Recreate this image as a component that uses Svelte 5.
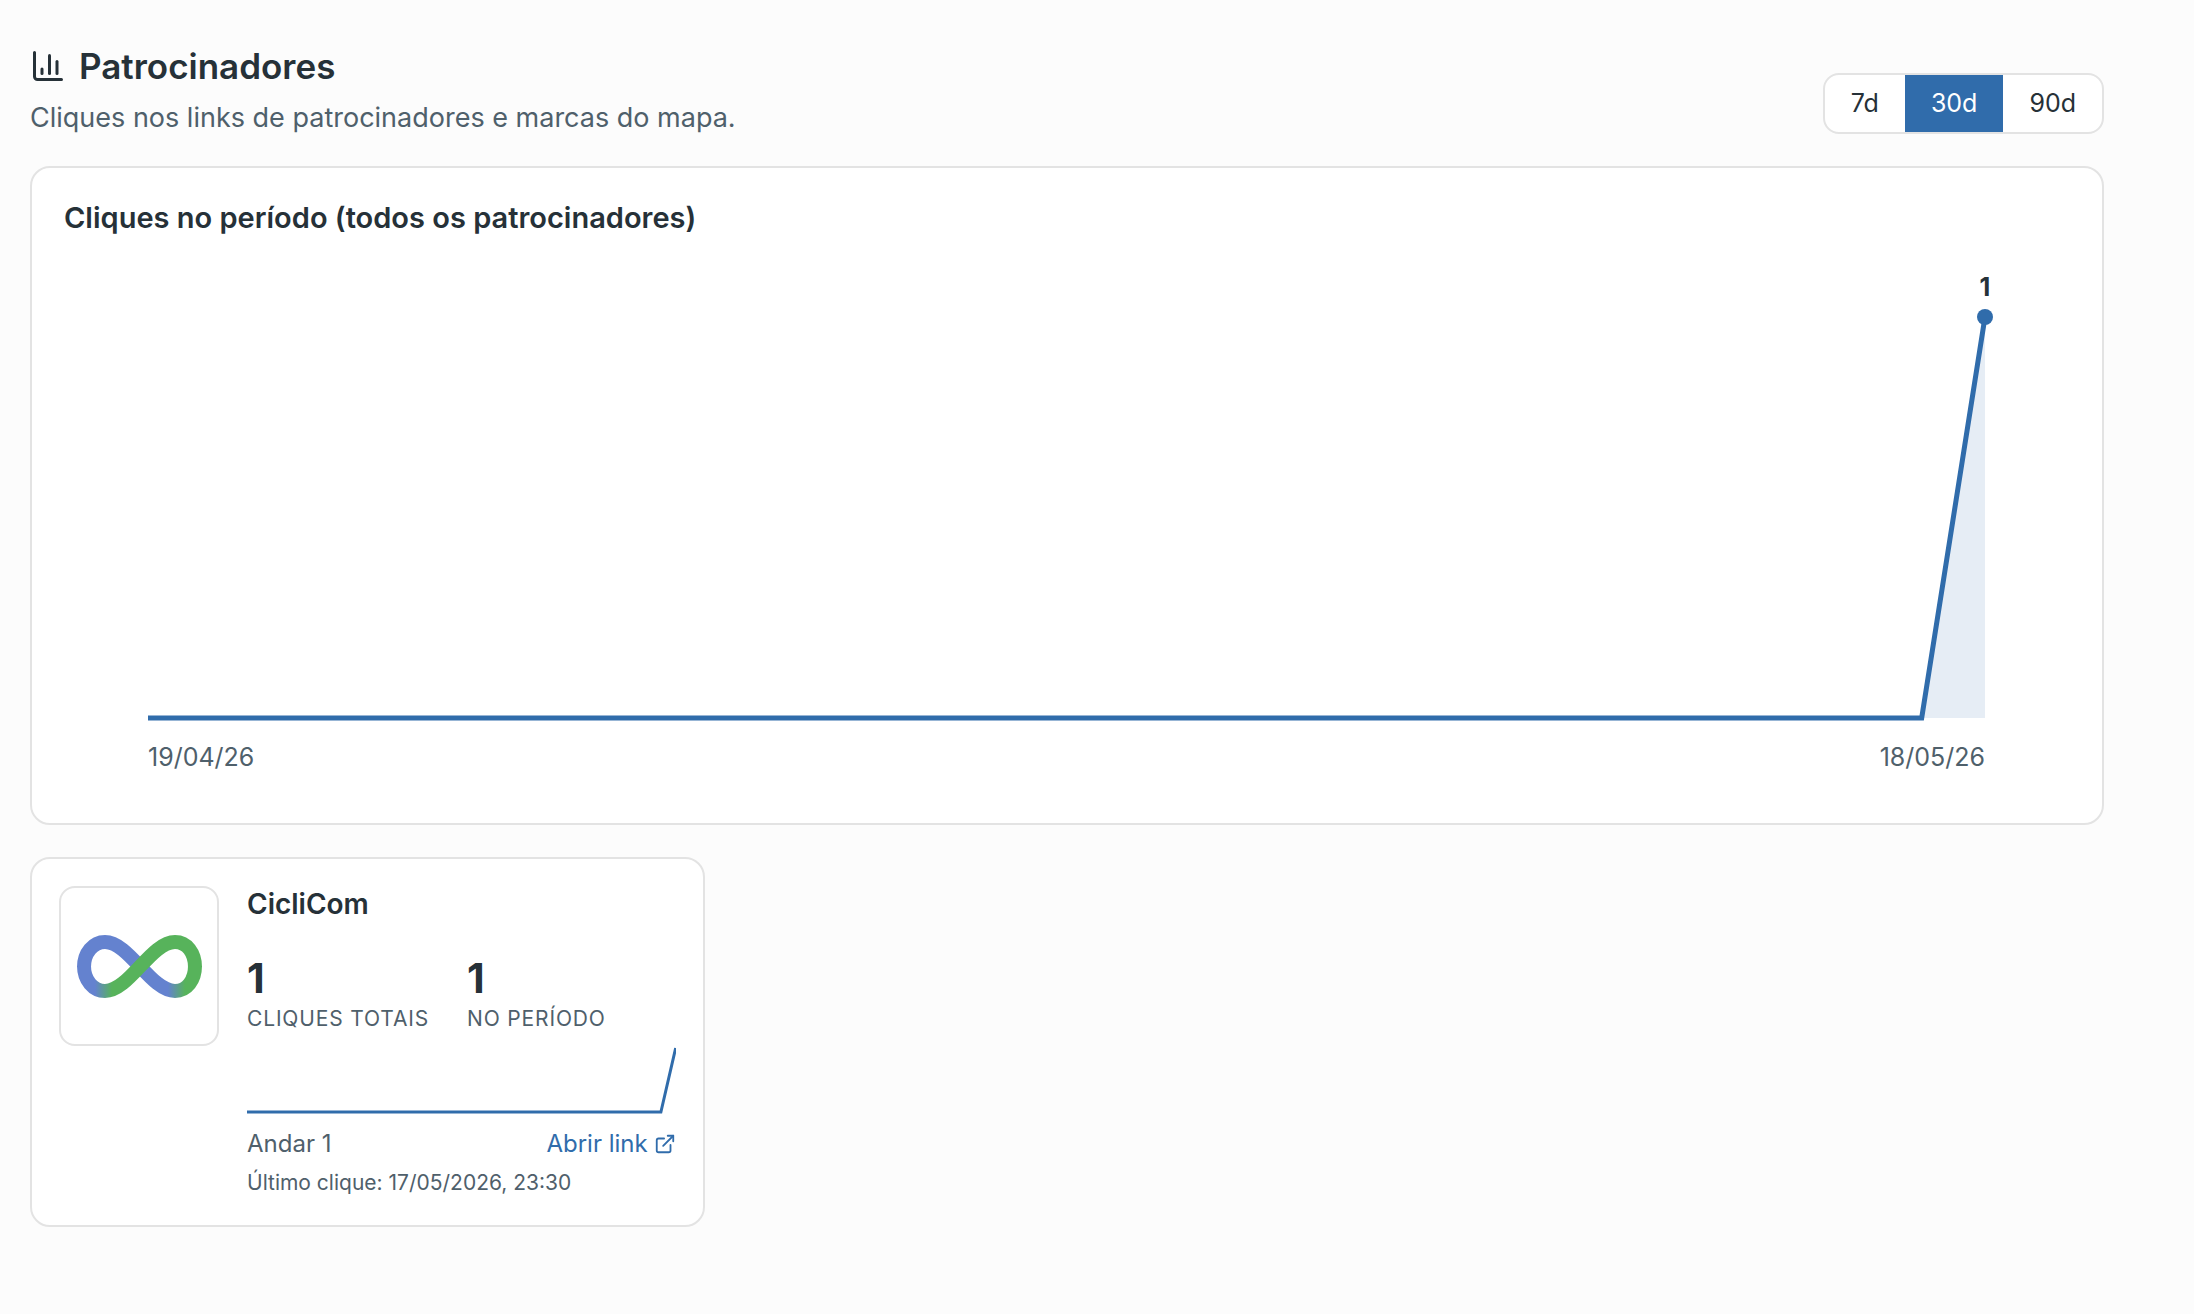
<script lang="ts">
	type Range = { days: number; label: string };

	const ranges: Range[] = [
		{ days: 7, label: '7d' },
		{ days: 30, label: '30d' },
		{ days: 90, label: '90d' }
	];

	let selected = $state(30);

	// Daily clicks, oldest first. Only the last day has any.
	const clicks: number[] = [...Array(29).fill(0), 1];
	const firstDay = '19/04/26';
	const lastDay = '18/05/26';

	const sponsors = [
		{
			name: 'CicliCom',
			total: 1,
			period: 1,
			floor: 'Andar 1',
			lastClick: '17/05/2026, 23:30',
			series: clicks
		}
	];

	// Plot area inside the 2006x540 viewBox
	const plot = { left: 84, right: 1921, top: 66, bottom: 467 };

	function toPoints(
		values: number[],
		box: { left: number; right: number; top: number; bottom: number }
	): string {
		const max = Math.max(...values, 1);
		const step = (box.right - box.left) / (values.length - 1);
		return values
			.map((v, i) => {
				const x = box.left + i * step;
				const y = box.bottom - (v / max) * (box.bottom - box.top);
				return `${x.toFixed(1)},${y.toFixed(1)}`;
			})
			.join(' ');
	}

	const line = toPoints(clicks, plot);
	const area = `${plot.left},${plot.bottom} ${line} ${plot.right},${plot.bottom}`;
</script>

<main class="page">
	<header class="header">
		<div class="heading">
			<h1>
				<svg class="icon-chart" viewBox="0 0 24 24" aria-hidden="true">
					<path d="M3 3v16a2 2 0 0 0 2 2h16" />
					<path d="M18 17V9" />
					<path d="M13 17V5" />
					<path d="M8 17v-3" />
				</svg>
				Patrocinadores
			</h1>
			<p>Cliques nos links de patrocinadores e marcas do mapa.</p>
		</div>
		<div class="ranges" role="group" aria-label="Período">
			{#each ranges as range (range.days)}
				<button
					type="button"
					class:active={selected === range.days}
					aria-pressed={selected === range.days}
					onclick={() => (selected = range.days)}
				>
					{range.label}
				</button>
			{/each}
		</div>
	</header>

	<section class="card chart-card">
		<h2>Cliques no período (todos os patrocinadores)</h2>
		<svg class="chart" viewBox="0 0 2006 540" role="img" aria-label="Cliques por dia">
			<polygon class="area" points={area} />
			<polyline class="line" points={line} />
			<circle cx={plot.right} cy={plot.top} r="8" />
			<text class="value" x={plot.right} y="45" text-anchor="middle">1</text>
			<text class="date" x={plot.left} y="515">{firstDay}</text>
			<text class="date" x={plot.right} y="515" text-anchor="end">{lastDay}</text>
		</svg>
	</section>

	<div class="grid">
		{#each sponsors as sponsor (sponsor.name)}
			<article class="card sponsor">
				<div class="logo">
					<svg viewBox="0 0 125 63" role="img" aria-label={sponsor.name}>
						<defs>
							<linearGradient id="fade-left" gradientUnits="userSpaceOnUse" x1="18" y1="0" x2="35" y2="0">
								<stop offset="0" stop-color="#6482cf" />
								<stop offset="1" stop-color="#57b35b" />
							</linearGradient>
							<linearGradient id="fade-right" gradientUnits="userSpaceOnUse" x1="91" y1="0" x2="108" y2="0">
								<stop offset="0" stop-color="#6482cf" />
								<stop offset="1" stop-color="#57b35b" />
							</linearGradient>
						</defs>
						<path
							stroke="url(#fade-right)"
							d="M7 32C7 18 16 7 28 7C52 7 74 56 98 56C110 56 118 45 118 31"
						/>
						<path
							stroke="url(#fade-left)"
							d="M7 31C7 45 16 56 28 56C52 56 74 7 98 7C110 7 118 18 118 32"
						/>
					</svg>
				</div>
				<div class="body">
					<h3>{sponsor.name}</h3>
					<dl class="stats">
						<div>
							<dt>Cliques totais</dt>
							<dd>{sponsor.total}</dd>
						</div>
						<div>
							<dt>No período</dt>
							<dd>{sponsor.period}</dd>
						</div>
					</dl>
					<svg class="spark" viewBox="0 0 430 72" preserveAspectRatio="none" aria-hidden="true">
						<polyline points={toPoints(sponsor.series, { left: 0, right: 430, top: 4, bottom: 68 })} />
					</svg>
					<div class="meta">
						<span>{sponsor.floor}</span>
						<a href="#ciclicom">
							Abrir link
							<svg class="icon-link" viewBox="0 0 24 24" aria-hidden="true">
								<path d="M15 3h6v6" />
								<path d="M10 14 21 3" />
								<path d="M18 13v6a2 2 0 0 1-2 2H5a2 2 0 0 1-2-2V8a2 2 0 0 1 2-2h6" />
							</svg>
						</a>
					</div>
					<p class="last">Último clique: {sponsor.lastClick}</p>
				</div>
			</article>
		{/each}
	</div>
</main>

<style>
	:global(body) {
		margin: 0;
		background: #fcfcfc;
	}
	.page {
		--primary: #306cab;
		--text: #263138;
		--muted: #4f606b;
		--border: #e3e3e3;

		display: flex;
		flex-direction: column;
		gap: 32px;
		padding: 44px 90px 88px 30px;
		font-family: Inter, 'Liberation Sans', sans-serif;
		color: var(--text);
	}
	h1,
	h2,
	h3,
	p,
	dl,
	dd {
		margin: 0;
	}
	svg {
		display: block;
	}

	.header {
		display: flex;
		align-items: flex-end;
		justify-content: space-between;
	}
	.heading {
		display: flex;
		flex-direction: column;
		gap: 14px;
	}
	h1 {
		display: flex;
		align-items: center;
		gap: 13px;
		font-size: 35px;
		line-height: 44px;
		font-weight: 600;
	}
	.icon-chart,
	.icon-link {
		flex: none;
		fill: none;
		stroke: currentColor;
		stroke-width: 2;
		stroke-linecap: round;
		stroke-linejoin: round;
	}
	.icon-chart {
		width: 36px;
		height: 36px;
	}
	.heading p {
		font-size: 27px;
		line-height: 32px;
		color: var(--muted);
	}

	.ranges {
		display: flex;
		border: 2px solid var(--border);
		border-radius: 16px;
		background: #fff;
		overflow: hidden;
	}
	.ranges button {
		padding: 0 26px;
		border: 0;
		background: none;
		font-family: inherit;
		font-size: 25px;
		line-height: 57px;
		color: var(--text);
		cursor: pointer;
	}
	.ranges .active {
		background: var(--primary);
		color: #fff;
	}

	.card {
		border: 2px solid var(--border);
		border-radius: 20px;
		background: #fff;
	}
	.chart-card {
		padding: 32px;
	}
	h2,
	h3 {
		font-size: 28px;
		line-height: 36px;
		font-weight: 600;
	}
	h2 {
		font-size: 29px;
		line-height: 35px;
	}
	.chart {
		width: 100%;
		margin-top: 16px;
	}
	.line {
		fill: none;
		stroke: var(--primary);
		stroke-width: 5;
	}
	.area {
		fill: var(--primary);
		opacity: 0.12;
	}
	circle {
		fill: var(--primary);
	}
	.value {
		font-size: 25px;
		font-weight: 700;
		fill: var(--text);
	}
	.date {
		font-size: 25px;
		fill: var(--muted);
	}

	.grid {
		display: grid;
		grid-template-columns: repeat(3, 1fr);
		gap: 25px;
	}
	.sponsor {
		display: flex;
		align-items: flex-start;
		gap: 28px;
		padding: 27px;
	}
	.logo {
		box-sizing: border-box;
		flex: none;
		display: grid;
		place-items: center;
		width: 160px;
		height: 160px;
		border: 2px solid var(--border);
		border-radius: 16px;
	}
	.logo svg {
		width: 125px;
	}
	.logo path {
		fill: none;
		stroke-width: 14;
	}
	.body {
		flex: 1;
		min-width: 0;
	}
	.stats {
		display: flex;
		gap: 38px;
		margin-top: 32px;
	}
	.stats div {
		display: flex;
		flex-direction: column-reverse;
	}
	dt {
		font-size: 21px;
		line-height: 34px;
		letter-spacing: 0.04em;
		text-transform: uppercase;
		color: var(--muted);
	}
	dd {
		font-size: 41px;
		line-height: 48px;
		font-weight: 700;
	}
	.spark {
		width: 100%;
		height: 72px;
		margin-top: 8px;
	}
	.spark polyline {
		fill: none;
		stroke: var(--primary);
		stroke-width: 3;
	}
	.meta {
		display: flex;
		justify-content: space-between;
		margin-top: 10px;
		font-size: 24px;
		line-height: 36px;
		color: var(--muted);
	}
	.meta a {
		display: inline-flex;
		align-items: center;
		gap: 6px;
		color: var(--primary);
		text-decoration: none;
	}
	.icon-link {
		width: 22px;
		height: 22px;
	}
	.last {
		margin-top: 6px;
		font-size: 21px;
		line-height: 30px;
		color: var(--muted);
	}
</style>
